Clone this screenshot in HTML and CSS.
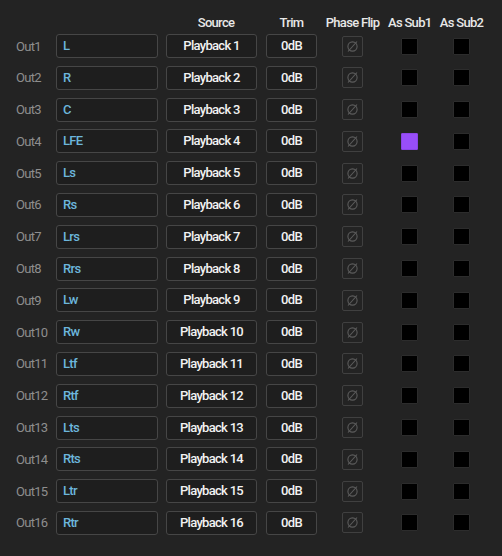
FILE: index.html
```html
<!DOCTYPE html>
<html lang="en">
<head>
    <meta charset="UTF-8">
    <meta name="viewport" content="width=device-width, initial-scale=1.0">
    <title>Output Routing</title>
    <link rel="stylesheet" href="styles.css">
</head>
<body>

<div class="matrix">
    <div class="row head">
        <span></span>
        <span></span>
        <span class="col-title">Source</span>
        <span class="col-title">Trim</span>
        <span class="col-title">Phase Flip</span>
        <span class="col-title">As Sub1</span>
        <span class="col-title">As Sub2</span>
    </div>
    <div class="rows" id="rows"></div>
</div>

<script>
    const names = ['L', 'R', 'C', 'LFE', 'Ls', 'Rs', 'Lrs', 'Rrs', 'Lw', 'Rw', 'Ltf', 'Rtf', 'Lts', 'Rts', 'Ltr', 'Rtr'];
    const rows = document.getElementById('rows');

    const phaseIcon = '<svg width="13" height="13" viewBox="0 0 13 13"><circle cx="6.5" cy="6.5" r="4.6" fill="none" stroke="#5c5c5c" stroke-width="1.1"/><line x1="2" y1="11.5" x2="11" y2="1.5" stroke="#5c5c5c" stroke-width="1.1"/></svg>';

    names.forEach(function(name, i) {
        const row = document.createElement('div');
        row.className = 'row';
        const sub1 = name === 'LFE' ? ' on' : '';
        row.innerHTML =
            '<span class="out-label">Out' + (i + 1) + '</span>' +
            '<div class="field name">' + name + '</div>' +
            '<div class="field source">Playback ' + (i + 1) + '</div>' +
            '<div class="field trim">0dB</div>' +
            '<div class="cell"><div class="phase">' + phaseIcon + '</div></div>' +
            '<div class="cell"><div class="toggle' + sub1 + '"></div></div>' +
            '<div class="cell"><div class="toggle"></div></div>';
        rows.appendChild(row);
    });
</script>

</body>
</html>
```

FILE: styles.css
```css
body {
    margin: 0;
    background-color: #232323;
    font-family: 'Roboto', 'Liberation Sans', sans-serif;
    font-size: 13px;
    letter-spacing: -0.7px;
    color: #ececec;
}

.matrix {
    padding: 12px 0 0 16px;
}

.row {
    display: grid;
    grid-template-columns: 40px 110px 100px 51px 71px 43px 61px;
    align-items: center;
    height: 24px;
}

.head {
    height: 20px;
    margin-bottom: 2px;
}

.col-title {
    text-align: center;
    white-space: nowrap;
    font-weight: 500;
    color: #e8e8e8;
}

.rows {
    display: flex;
    flex-direction: column;
    gap: 7.8px;
}

.out-label {
    color: #8e8e8e;
}

.field {
    box-sizing: border-box;
    height: 24px;
    line-height: 22px;
    border: 1px solid #464646;
    border-radius: 3px;
    background-color: #1e1e1e;
    font-weight: 500;
}

.name {
    width: 102px;
    padding-left: 6px;
    color: #6cb6dc;
}

.source {
    width: 91px;
    text-align: center;
    color: #f2f2f2;
}

.trim {
    width: 51px;
    text-align: center;
    color: #f2f2f2;
}

.cell {
    display: flex;
    justify-content: center;
    align-items: center;
}

.phase {
    box-sizing: border-box;
    width: 21px;
    height: 21px;
    border: 1px solid #404040;
    border-radius: 2px;
    display: flex;
    justify-content: center;
    align-items: center;
}

.toggle {
    box-sizing: border-box;
    width: 17px;
    height: 17px;
    background-color: #000;
    border: 1px solid #2c2c2c;
    border-radius: 1px;
}

.toggle.on {
    background-color: #984ef9;
    border-color: #8a45e6;
}
```
